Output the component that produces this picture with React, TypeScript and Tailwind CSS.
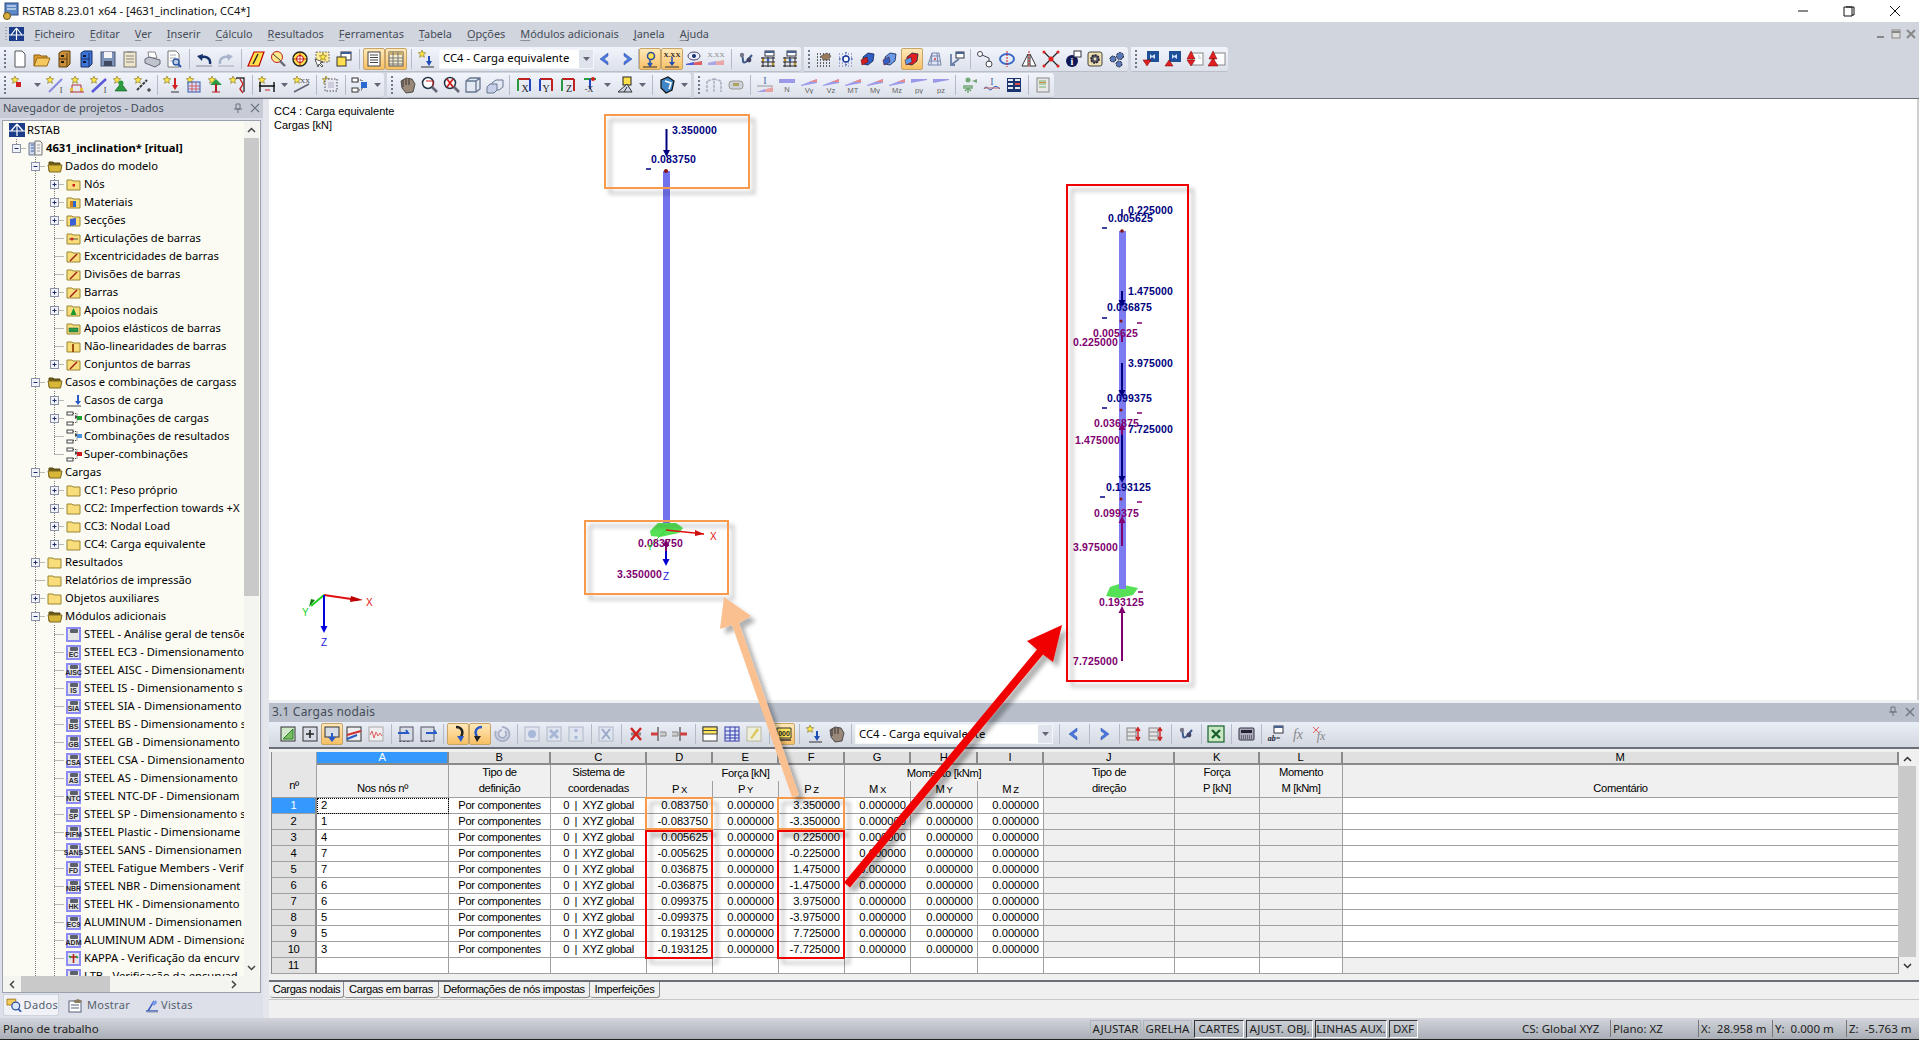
import type { ReactNode } from "react";

const star = (x = 0, y = 0) => (
  <path transform={`translate(${x} ${y})`} d="M4 0l1 2.6 2.7.2-2 1.8.7 2.7L4 5.8 1.600 7.300l.7-2.700-2-1.800 2.700-.2z" fill="#ffe84a" stroke="#7a6a10" strokeWidth=".6" />
);
const dia = (top: string, label: string, flip = false) => (
  <>
    <path d={flip ? "M1 3h16v1L1 7z" : "M1 9L17 3v4L1 10z"} fill="#9a9ae8" />
    <path d={flip ? "" : "M9 6l8-3v3z"} fill={top} />
    <text x="9" y="17" fontSize="7.500" textAnchor="middle" fill="#666" fontFamily="Liberation Sans, sans-serif">{label}</text>
  </>
);
const blueCube = (c = "#2f5fc4", red = "#d02020") => (
  <>
    <path d="M4 7l5-4 6 1-1 7-5 4-5-1z" fill={c} stroke="#14224f" strokeWidth=".8" />
    <path d="M2 10l6-3 1 5-6 3z" fill={red} stroke="#600" strokeWidth=".5" />
  </>
);
const abacus = (
  <>
    <rect x="6" y="1" width="9" height="5" fill="#fff" stroke="#334" />
    <rect x="6" y="1" width="9" height="2" fill="#46628f" />
    <path d="M2 8h14M2 12h14M2 16h14M4 7v10M9 7v10M14 7v10" stroke="#222" />
    <circle cx="4" cy="10" r="1.300" fill="#c09020" /><circle cx="9" cy="10" r="1.300" fill="#3060c0" /><circle cx="14" cy="14" r="1.300" fill="#c09020" />
  </>
);
const dotGrid = (c: string) => (
  <path d="M2 4h14M2 7h14M2 10h14M2 13h14M2 16h14" stroke={c} strokeDasharray="1 2" strokeWidth="1.300" />
);

const icons: Record<string, ReactNode> = {
  new: <path d="M4 1h7l3 3v13H4z" fill="#fff" stroke="#555" />,
  open: <><path d="M1 16V5h6l1 1h6v3" fill="#dd9d2c" stroke="#8b5f12" /><path d="M4 8h13l-3 8H1z" fill="#f6c95e" stroke="#94691a" /></>,
  db1: <><path d="M4 3l3-2h8v13l-3 3H4z" fill="#c98e3a" stroke="#5e3f10" /><path d="M4 9h8M12 3v14" stroke="#5e3f10" /><rect x="6" y="5" width="3" height="2" fill="#231a06" /><rect x="6" y="11" width="3" height="2" fill="#231a06" /></>,
  db2: <><path d="M4 3l3-2h8v13l-3 3H4z" fill="#3c74d8" stroke="#183068" /><path d="M4 9h8M12 3v14" stroke="#183068" /><rect x="6" y="5" width="3" height="2" fill="#0c1838" /><rect x="6" y="11" width="3" height="2" fill="#0c1838" /></>,
  save: <><rect x="2" y="2" width="14" height="14" fill="#7f93b8" stroke="#4a5878" /><rect x="5" y="2" width="8" height="6" fill="#f4f4f4" /><rect x="5" y="11" width="8" height="5" fill="#3f4a60" /></>,
  clip: <><rect x="3" y="2" width="12" height="15" fill="#efe6c8" stroke="#777" /><rect x="6" y="1" width="6" height="2" fill="#999" /><path d="M5 6h8M5 9h8M5 12h8" stroke="#888" /></>,
  print: <><path d="M5 2h7l2 6H6z" fill="#fff" stroke="#888" /><path d="M2 9l4-2 11 3v4l-5 3-10-4z" fill="#bfc4cc" stroke="#667" /></>,
  prev: <><path d="M3 1h8l3 3v13H3z" fill="#fff" stroke="#777" /><path d="M5 5h6M5 8h6M5 11h3" stroke="#aaa" /><circle cx="11" cy="12" r="3" fill="#bcd" stroke="#2a54a8" strokeWidth="1.300" /><path d="M13 14l3 3" stroke="#2a54a8" strokeWidth="2" /></>,
  undo: <><path d="M15 14c1-6-5-9-10-6" fill="none" stroke="#14316e" strokeWidth="2.400" /><path d="M2 6l6-2-1 7z" fill="#14316e" /><path d="M1 16h16" stroke="#889" /></>,
  redo: <><path d="M3 14c-1-6 5-9 10-6" fill="none" stroke="#a9b4ca" strokeWidth="2.400" /><path d="M16 6l-6-2 1 7z" fill="#a9b4ca" /><path d="M1 16h16" stroke="#aab" /></>,
  para: <><path d="M7 2h10l-5 14H1z" fill="#ffe04d" stroke="#c00000" strokeWidth="1.200" /><path d="M6 14L11 4" stroke="#222" strokeWidth="1.400" /></>,
  circ: <><circle cx="8" cy="7" r="5.500" fill="#ffe98a" stroke="#c02020" /><path d="M4 4l8 7" stroke="#333" /><path d="M11 11l5 5" stroke="#667" strokeWidth="2.400" /></>,
  target: <><circle cx="9" cy="9" r="7" fill="#ffe04d" stroke="#222" strokeWidth="1.400" /><circle cx="9" cy="9" r="3.500" fill="#fff" stroke="#c00000" /><path d="M9 3v12M3 9h12" stroke="#c00000" strokeWidth=".8" /></>,
  starwin: <><rect x="3" y="2" width="13" height="10" fill="#ffeb9a" stroke="#777" strokeDasharray="2 1" />{star(6, 3)}<path d="M2 9l3 8 1-3 3 3 1-1-3-3 3-1z" fill="#fff" stroke="#333" strokeWidth=".8" /></>,
  win2: <><rect x="6" y="2" width="10" height="8" fill="#fff" stroke="#333" /><rect x="6" y="2" width="10" height="2" fill="#3a5a9a" /><rect x="2" y="7" width="9" height="9" fill="#ffde4d" stroke="#333" /></>,
  list: <><rect x="3" y="2" width="12" height="14" fill="#fff" stroke="#444" /><path d="M5 5h8M5 7.500h8M5 10h8M5 12.500h8" stroke="#444" /></>,
  table: <><rect x="2" y="2" width="14" height="14" fill="#f6efd0" stroke="#555" /><rect x="2" y="2" width="14" height="3" fill="#c9b070" /><path d="M2 8h14M2 11h14M2 14h14M6 2v14M11 2v14" stroke="#777" /></>,
  load: <>{star(1, 0)}<path d="M12 6v8" stroke="#1f4fb5" strokeWidth="2" /><path d="M9 11h6l-3 5z" fill="#1f4fb5" /><path d="M4 17h13" stroke="#333" /></>,
  al: <path d="M12 3L4 9l8 6v-3L8 9l4-3z" fill="#4a78e0" stroke="#2a4aa0" strokeWidth=".5" />,
  ar: <path d="M6 3l8 6-8 6v-3l4-3-4-3z" fill="#4a78e0" stroke="#2a4aa0" strokeWidth=".5" />,
  actp: <><circle cx="10" cy="6" r="3.500" fill="#ffe04d" stroke="#2a4aa0" strokeWidth="1.500" /><path d="M9 9v5M7 13l2 3 2-3" stroke="#1f4fb5" strokeWidth="1.500" fill="none" /><path d="M2 17h14" stroke="#333" /></>,
  actx: <><text x="9" y="6.500" fontSize="7" fontWeight="700" textAnchor="middle" fontFamily="Liberation Serif, serif" fill="#222">X.XX</text><path d="M9 7v7" stroke="#1f4fb5" strokeWidth="1.500" /><path d="M6 12h6l-3 4z" fill="#1f4fb5" /><path d="M2 17h14" stroke="#333" /></>,
  eye: <><ellipse cx="9" cy="6" rx="6" ry="4" fill="#eef" stroke="#446" /><circle cx="9" cy="6" r="2" fill="#14316e" /><path d="M1 14l16-3v4H1z" fill="#e06060" /><path d="M1 14l8-2v3H1z" fill="#5060d8" /></>,
  xxg: <><text x="9" y="7" fontSize="7" textAnchor="middle" fontFamily="Liberation Serif, serif" fill="#888">X.XX</text><path d="M1 13l16-3v5H1z" fill="#e8a8a8" /><path d="M1 13l8-2v4H1z" fill="#a8a8e8" /></>,
  hand: <><path d="M3 5c3 0 3 4 3 6s2 2 4 0l5-6" fill="none" stroke="#3f5a8a" strokeWidth="2" /><circle cx="5" cy="5" r="2.200" fill="#778" /><circle cx="12" cy="10" r="2.400" fill="#446" /></>,
  gridA: abacus,
  gridB: abacus,
  dots1: <>{dotGrid("#333")}<path d="M6 6l6-3 4 3-3 4-5 0z" fill="#9a7a5a" stroke="#444" strokeWidth=".6" /></>,
  dots2: <><path d="M2 9h14M9 2v14" stroke="#2444b0" strokeDasharray="1.500 1.500" strokeWidth="1.300" />{dotGrid("#8898c8")}<circle cx="9" cy="9" r="3" fill="#fff" stroke="#1a3aa0" strokeWidth="1.400" /></>,
  blue1: blueCube(),
  blue2: blueCube("#6a9ae8", "#3060c8"),
  blue3: blueCube("#e02020", "#5a9ae8"),
  grid3: <><path d="M3 15l4-12h7l2 12z" fill="#dfe6f5" stroke="#7a88b0" /><path d="M4 11h12M6 6h9M7 3l-1 12M12 3l1 12" stroke="#7a88b0" /><circle cx="10" cy="9" r="1" fill="#d03030" /></>,
  frame: <><rect x="9" y="2" width="8" height="6" fill="#fff" stroke="#334" /><rect x="9" y="2" width="8" height="2" fill="#46628f" /><path d="M4 4v11h4M4 15l8-6" fill="none" stroke="#6a80a8" strokeWidth="1.800" /></>,
  chain: <><circle cx="4" cy="4" r="2.500" fill="#fff" stroke="#445" /><circle cx="13" cy="14" r="3" fill="#fff" stroke="#445" /><path d="M6 5l7 3v4" fill="none" stroke="#445" /></>,
  rot: <><ellipse cx="9" cy="9" rx="7" ry="5" fill="none" stroke="#3868c8" strokeWidth="2" /><path d="M9 1v16" stroke="#d02020" strokeDasharray="2 1" /></>,
  mirror: <><path d="M8 4v12H2zM10 4v12h6z" fill="#fff" stroke="#333" /><path d="M9 1v16" stroke="#d02020" strokeDasharray="2 1" /></>,
  xcross: <><path d="M2 2l14 14M16 2L2 16" stroke="#222" strokeWidth="1.200" /><circle cx="9" cy="9" r="2.500" fill="#e02020" /><circle cx="2" cy="2" r="1.500" fill="#e02020" /><circle cx="16" cy="2" r="1.500" fill="#e02020" /><circle cx="2" cy="16" r="1.500" fill="#e02020" /><circle cx="16" cy="16" r="1.500" fill="#e02020" /></>,
  info: <><circle cx="8" cy="11" r="6" fill="#101858" /><text x="8" y="15" fontSize="10" fontWeight="700" textAnchor="middle" fill="#fff" fontFamily="Liberation Serif, serif">i</text><rect x="10" y="1" width="7" height="6" fill="#fff" stroke="#334" /></>,
  gear1: <><rect x="2" y="2" width="14" height="14" rx="2" fill="#efe0b0" stroke="#444" /><circle cx="9" cy="9" r="4" fill="#556" stroke="#223" strokeDasharray="2 1" strokeWidth="1.600" /><circle cx="9" cy="9" r="1.400" fill="#efe0b0" /></>,
  gear2: <><circle cx="12" cy="6" r="3.500" fill="#5878b8" stroke="#223" strokeDasharray="2 1" /><circle cx="5" cy="9" r="3" fill="#5878b8" stroke="#223" strokeDasharray="2 1" /><circle cx="11" cy="14" r="3" fill="#5878b8" stroke="#223" strokeDasharray="2 1" /></>,
  bd1: <><rect x="5" y="1" width="12" height="11" fill="#1f4f96" /><path d="M8 4l2 2 3-2v5l-3-2-2 2z" fill="#cfe0ff" /><path d="M1 10h8l-4 6z" fill="#e02020" stroke="#700" strokeWidth=".5" /></>,
  bd2: <><rect x="5" y="1" width="12" height="11" fill="#1f4f96" /><path d="M8 4l2 2 3-2v5l-3-2-2 2z" fill="#cfe0ff" /><path d="M5 10l4 6H1z" fill="#e02020" stroke="#700" strokeWidth=".5" /></>,
  bd3: <><rect x="6" y="3" width="11" height="12" fill="#fff" stroke="#888" /><path d="M12 3l4 6-4 0z" fill="#ddd" /><path d="M1 10h8l-4 6zM5 1l4 8H1z" fill="#e02020" stroke="#700" strokeWidth=".5" /></>,
  bd4: <><rect x="6" y="3" width="11" height="12" fill="#fff" stroke="#888" /><path d="M5 1l4 8H1zM5 8l5 8H0z" fill="#e02020" stroke="#700" strokeWidth=".5" /></>,
  s1: <>{star(0, 0)}<rect x="5" y="6" width="5" height="5" fill="#d02020" /></>,
  barS: <>{star(0, 0)}<path d="M3 16L16 3" stroke="#8888dd" strokeWidth="2" /><text x="15" y="17" fontSize="8" textAnchor="middle" fill="#444" fontFamily="Liberation Serif, serif">I</text></>,
  nodeS: <>{star(3, 0)}<path d="M2 16h14M4 9v7M13 9v7M4 9h9" stroke="#b03030" /><rect x="2" y="12" width="3" height="3" fill="#e8c040" /><rect x="12" y="12" width="3" height="3" fill="#e8c040" /></>,
  barS2: <>{star(0, 0)}<path d="M2 16L16 3" stroke="#5858d8" strokeWidth="2.500" /><text x="15" y="17" fontSize="8" textAnchor="middle" fill="#444" fontFamily="Liberation Serif, serif">I</text></>,
  supS: <>{star(1, 0)}<path d="M9 7l6 8H3z" fill="#2c9a40" stroke="#14501f" strokeWidth=".6" /><circle cx="9" cy="7" r="2.500" fill="#2c9a40" /></>,
  wandS: <>{star(0, 0)}<path d="M3 14L13 4" stroke="#3a3a3a" strokeWidth="2" strokeDasharray="3 1" /><path d="M13 14h4M15 12v4" stroke="#222" /></>,
  loadN: <>{star(0, 0)}<path d="M12 2v9" stroke="#d02020" strokeWidth="2" /><path d="M9 9h6l-3 5z" fill="#d02020" /><path d="M8 16h8" stroke="#333" /></>,
  matS: <>{star(1, 0)}<rect x="3" y="6" width="12" height="10" fill="#cfe0ff" stroke="#3058b0" /><path d="M3 10h12M3 13h12M7 6v10M11 6v10" stroke="#d03030" strokeWidth=".7" /></>,
  treeS: <>{star(1, 0)}<path d="M9 3l6 6H3z" fill="#2c9a40" /><path d="M9 8v8" stroke="#b02020" strokeWidth="2" /><path d="M5 16h8" stroke="#b02020" /></>,
  twistS: <>{star(0, 0)}<path d="M7 2h8v14" fill="none" stroke="#333" strokeWidth="1.400" /><path d="M11 3l3 5-3 5 3 4" fill="none" stroke="#c02020" strokeWidth="1.400" /></>,
  beamS: <>{star(0, 0)}<path d="M1 10h16M2 6v10M16 6v10" stroke="#111" strokeWidth="1.400" /><path d="M7 14h5" stroke="#d02020" /></>,
  xxS: <>{star(0, 0)}<text x="12" y="7" fontSize="7" textAnchor="middle" fontFamily="Liberation Serif, serif" fill="#444">XX</text><path d="M1 16L16 8" stroke="#667" strokeWidth="1.600" /></>,
  selS: <>{star(0, 0)}<rect x="3" y="3" width="12" height="12" fill="#e8e8f0" stroke="#444" strokeDasharray="1.500 1.500" /><rect x="6" y="6" width="6" height="6" fill="#ccd" /></>,
  combo: <><rect x="1" y="2" width="6" height="4" fill="#fff" stroke="#333" /><rect x="1" y="12" width="6" height="4" fill="#fff" stroke="#333" /><path d="M7 4h4v10H7" fill="none" stroke="#333" strokeDasharray="1 1" /><rect x="10" y="6" width="6" height="6" fill="#2a6ad0" /></>,
  hand2: <><path d="M3 5l5-3 6 1 3 5-2 8-7 1-4-5z" fill="#9a8878" stroke="#333" strokeWidth=".8" /><path d="M5 4v7M8 3v6M11 3v6" stroke="#333" /></>,
  zoomW: <><circle cx="8" cy="7" r="5.500" fill="#fff" stroke="#234" strokeWidth="1.500" /><path d="M6 5h7v5" fill="none" stroke="#d02020" /><path d="M12 11l5 5" stroke="#667" strokeWidth="2.600" /></>,
  zoomX: <><circle cx="8" cy="7" r="5.500" fill="#fff" stroke="#234" strokeWidth="1.500" /><path d="M5 3l6 8M11 3l-6 8" stroke="#d02020" strokeWidth="1.800" /><path d="M12 11l5 5" stroke="#667" strokeWidth="2.600" /></>,
  box: <path d="M2 5l4-3h10v11l-4 3H2zM2 5h10v11M12 5l4-3" fill="#e4e8f2" stroke="#667790" strokeWidth="1.300" />,
  box2: <><path d="M6 7l4-3h7v7l-4 3H6z" fill="#e4e8f2" stroke="#667790" /><path d="M1 11l3-3h7v6l-3 3H1z" fill="#c5d0e8" stroke="#667790" /></>,
  vx: <><path d="M3 3h12" stroke="#c02020" strokeWidth="2" /><path d="M3 3v12" stroke="#2c9a40" strokeWidth="2" /><path d="M15 3v12" stroke="#2444c0" strokeWidth="2" /><text x="10" y="16" fontSize="10" textAnchor="middle" fontFamily="Liberation Serif, serif" fill="#222">X</text></>,
  vy: <><path d="M3 3h12" stroke="#c02020" strokeWidth="2" /><path d="M3 3v12" stroke="#2444c0" strokeWidth="2" /><path d="M15 3v12" stroke="#c02020" strokeWidth="2" /><text x="9" y="16" fontSize="10" textAnchor="middle" fontFamily="Liberation Serif, serif" fill="#222">Y</text></>,
  vz: <><path d="M3 3h12" stroke="#c02020" strokeWidth="2" /><path d="M3 3v12" stroke="#2c9a40" strokeWidth="2" /><path d="M15 3v12" stroke="#c02020" strokeWidth="2" /><text x="10" y="16" fontSize="10" textAnchor="middle" fontFamily="Liberation Serif, serif" fill="#222">Z</text></>,
  vmx: <><path d="M3 3h12" stroke="#2c9a40" strokeWidth="2" /><circle cx="12" cy="3" r="2" fill="#d02020" /><path d="M9 3v10" stroke="#2444c0" strokeWidth="2" /><text x="8" y="16" fontSize="8" textAnchor="middle" fontFamily="Liberation Serif, serif" fill="#222">-X</text></>,
  lamp: <><rect x="7" y="1" width="8" height="8" fill="#ffe04d" stroke="#222" /><path d="M2 16l9-8 5 8zM8 16l3-5" fill="#cdd5e6" stroke="#333" /></>,
  shield: <><path d="M3 4l7-3 6 4-2 9-6 3-5-5z" fill="#3f86c8" stroke="#111" strokeWidth="1.200" /><path d="M7 5l6 2-2 6" fill="none" stroke="#fff" strokeWidth="1.600" /></>,
  frameG: <path d="M2 16V5l7-2v13M9 3l7 2v11" fill="none" stroke="#a8b0c0" strokeWidth="1.600" strokeDasharray="3 1" />,
  tag: <><rect x="2" y="5" width="14" height="8" rx="3" fill="#cfd2d8" stroke="#999" /><rect x="6" y="7" width="6" height="3" fill="#b0a060" /></>,
  nI: <><text x="9" y="8" fontSize="10" textAnchor="middle" fontFamily="Liberation Serif, serif" fill="#5070a8">I</text><path d="M1 16l16-5v5z" fill="#e8a0a0" /><path d="M1 16l8-3v3z" fill="#a0a0e8" /><path d="M1 10h16" stroke="#999" /></>,
  nN: <><path d="M1 3h16v4H1z" fill="#9a9ae8" /><text x="9" y="16" fontSize="7.500" textAnchor="middle" fill="#666" fontFamily="Liberation Sans, sans-serif">N</text></>,
  vyD: dia("#e88a8a", "Vy"),
  vzD: dia("#e88a8a", "Vz"),
  mtD: dia("#e88a8a", "MT"),
  myD: dia("#e88a8a", "My"),
  mzD: dia("#e88a8a", "Mz"),
  pyD: dia("#e88a8a", "py", true),
  pzD: dia("#e88a8a", "pz", true),
  greenUp: <><circle cx="7" cy="4" r="2.500" fill="#74a878" /><path d="M3 10h8v2H3zM7 12v5M4 15l3-3 3 3" stroke="#74a878" strokeWidth="1.500" fill="none" /><path d="M16 3l-5 2 5 2z" fill="#74a878" /></>,
  beamSine: <><text x="9" y="9" fontSize="10" textAnchor="middle" fontFamily="Liberation Serif, serif" fill="#5070a8">I</text><path d="M1 13c3-6 5 4 8 0s5-3 8 0" fill="none" stroke="#3060c0" /><path d="M1 12h16" stroke="#c06060" /></>,
  multi: <><rect x="2" y="2" width="14" height="14" fill="#1a3470" /><path d="M3 4h5M10 4h5M3 8h5M10 8h5M3 12h5M10 12h5" stroke="#e8e8f0" strokeWidth="2" /><path d="M10 8h5" stroke="#e05050" strokeWidth="2" /></>,
  report: <><rect x="3" y="2" width="12" height="14" fill="#e8e8e8" stroke="#888" /><path d="M5 5h7M5 8h7M5 11h7" stroke="#70b070" /><path d="M5 6.500h7" stroke="#d09040" /></>,
  t1: <><rect x="2" y="2" width="14" height="14" fill="#cfe8c8" stroke="#333" /><path d="M4 14L14 4v10z" fill="#78c060" stroke="#2a7a30" /></>,
  t2: <><rect x="2" y="2" width="14" height="14" fill="#d8dce4" stroke="#333" /><path d="M5 9h8M9 5v8" stroke="#222" strokeWidth="1.600" /></>,
  t3: <><rect x="2" y="2" width="14" height="10" fill="#d8dce4" stroke="#333" /><path d="M9 8v8" stroke="#2a5ac8" strokeWidth="2" /><path d="M5 12h8l-4 5z" fill="#2a5ac8" /></>,
  t4: <><rect x="2" y="2" width="14" height="14" fill="#eee" stroke="#333" /><path d="M2 10L16 6" stroke="#d03030" strokeWidth="2" /><path d="M2 14L12 10" stroke="#2a5ac8" strokeWidth="2" /></>,
  t5: <><rect x="2" y="2" width="14" height="14" fill="#eee" stroke="#aaa" /><path d="M3 10l2-4 2 7 2-6 2 4 2-3 2 3" fill="none" stroke="#e06060" /></>,
  tin: <><rect x="3" y="2" width="13" height="14" fill="#d8dce4" stroke="#556" /><path d="M1 8h10l-2-3M1 8l2 0" fill="none" stroke="#2a5ac8" strokeWidth="2" /><path d="M3 16v1M7 16v1M11 16v1" stroke="#222" /></>,
  tout: <><rect x="2" y="2" width="13" height="14" fill="#d8dce4" stroke="#556" /><path d="M7 8h10l-2-3" fill="none" stroke="#2a5ac8" strokeWidth="2" /><path d="M3 16v1M7 16v1M11 16v1" stroke="#222" /></>,
  rotL: <><path d="M7 2c6 0 8 5 5 10" fill="none" stroke="#222" strokeWidth="2.400" /><path d="M8 11l7 0-3 6z" fill="#2a5ac8" /></>,
  rotR: <><path d="M11 2C5 2 3 7 6 12" fill="none" stroke="#2a5ac8" strokeWidth="2.400" /><path d="M10 11H3l3 6z" fill="#222" /></>,
  rotG: <path d="M9 2a7 7 0 1 1-6 4M9 5a4 4 0 1 0 3 1" fill="none" stroke="#a8b0c8" strokeWidth="2" />,
  gPlus: <><rect x="2" y="2" width="14" height="14" fill="#dfe4ef" stroke="#b0b8c8" /><circle cx="9" cy="9" r="4" fill="#a8b8d8" /></>,
  gMul: <><rect x="2" y="2" width="14" height="14" fill="#dfe4ef" stroke="#b0b8c8" /><path d="M5 5l8 8M13 5l-8 8" stroke="#a8b8d8" strokeWidth="3" /></>,
  gDiv: <><rect x="2" y="2" width="14" height="14" fill="#dfe4ef" stroke="#b0b8c8" /><path d="M9 4v3M9 11v3" stroke="#a8b8d8" strokeWidth="3" /></>,
  gX: <><rect x="2" y="2" width="14" height="14" fill="#dfe4ef" stroke="#b0b8c8" /><path d="M5 4l8 10M13 4L5 14" stroke="#98a8c8" strokeWidth="2" /></>,
  delR: <><path d="M4 9h10" stroke="#888" strokeWidth="3" /><path d="M4 3l10 12M14 3L4 15" stroke="#d02020" strokeWidth="2.400" /></>,
  insL: <><path d="M9 2v14" stroke="#888" strokeWidth="2" /><path d="M2 9h7" stroke="#d04040" strokeWidth="3" /><path d="M11 7h6v4h-6" fill="#ccc" stroke="#888" /></>,
  insR: <><path d="M9 2v14" stroke="#888" strokeWidth="2" /><path d="M9 9h7" stroke="#d04040" strokeWidth="3" /><path d="M1 7h6v4H1" fill="#ccc" stroke="#888" /></>,
  ctY: <><rect x="2" y="2" width="14" height="14" fill="#fff" stroke="#444" /><rect x="2" y="2" width="14" height="7" fill="#ffe55c" stroke="#444" /><path d="M2 5.500h14" stroke="#444" /></>,
  ctB: <><rect x="2" y="2" width="14" height="14" fill="#dfe6fa" stroke="#3038a8" /><path d="M2 6h14M2 10h14M2 13h14M7 2v14M12 2v14" stroke="#3038a8" /></>,
  ctP: <><rect x="2" y="2" width="14" height="14" fill="#eeeedd" stroke="#b8b8a0" /><path d="M5 13l7-10 2 2-7 9z" fill="#ddc860" /></>,
  act: <><path d="M2 3h14v10H2z" fill="#ffe55c" stroke="#333" /><text x="9" y="11" fontSize="7" fontWeight="700" textAnchor="middle" fontFamily="Liberation Sans, sans-serif" fill="#222">000</text><path d="M2 15h14" stroke="#333" strokeWidth="1.500" /></>,
  sortU: <><rect x="2" y="3" width="9" height="12" fill="#e4e4e4" stroke="#888" /><path d="M2 7h9M2 11h9" stroke="#888" /><path d="M13 2v14M11 6l2-3 2 3M11 12l2 3 2-3" fill="none" stroke="#d02020" strokeWidth="1.400" /></>,
  xls: <><rect x="1" y="1" width="16" height="16" fill="#c8e8c0" stroke="#186030" strokeWidth="1.200" /><path d="M5 5l8 8M13 5l-8 8" stroke="#186030" strokeWidth="2.400" /></>,
  keyp: <><rect x="2" y="3" width="15" height="12" rx="1" fill="#aab" stroke="#334" /><rect x="4" y="5" width="11" height="3" fill="#223" /><path d="M4 11h11M4 13h11" stroke="#223" strokeDasharray="1 1" /></>,
  abEq: <><rect x="7" y="1" width="9" height="7" fill="#fff" stroke="#334" /><rect x="7" y="1" width="9" height="2" fill="#46628f" /><text x="7" y="16" fontSize="8" fontWeight="700" fontStyle="italic" textAnchor="middle" fontFamily="Liberation Serif, serif" fill="#223">ab=</text></>,
  fx: <text x="9" y="14" fontSize="14" fontStyle="italic" textAnchor="middle" fontFamily="Liberation Serif, serif" fill="#888">fx</text>,
  fxr: <><text x="10" y="15" fontSize="12" fontStyle="italic" textAnchor="middle" fontFamily="Liberation Serif, serif" fill="#888">fx</text><path d="M2 2l6 6M8 2L2 8" stroke="#e06060" /></>,
};

function Icon({ n, active }: { n: string; active?: boolean }) {
  return (
    <span className={`flex h-[22px] w-[22px] shrink-0 items-center justify-center ${active ? "rounded-[2px] border border-[#c8a468] bg-gradient-to-b from-[#ffe9b8] to-[#f8bf62]" : ""}`}>
      <svg width="18" height="18" viewBox="0 0 18 18">{icons[n]}</svg>
    </span>
  );
}

const Sep = ({ wide }: { wide?: boolean }) => (
  <span className={`flex h-[20px] shrink-0 justify-center ${wide ? "w-[8px]" : "w-[7px]"}`}>
    <span className="h-full w-px bg-[#b4bac6]" />
  </span>
);

const Grip = () => (
  <span className="flex h-[20px] w-[9px] shrink-0 flex-col items-center justify-center gap-[2px]">
    {[0, 1, 2, 3, 4].map((i) => (
      <span key={i} className="h-[2px] w-[2px] bg-[#6f7888]" />
    ))}
  </span>
);

const Drop = () => (
  <span className="flex w-[13px] shrink-0 justify-center">
    <svg width="7" height="4" viewBox="0 0 7 4"><path d="M0 0h7L3.500 4z" fill="#667" /></svg>
  </span>
);

function Combo({ w }: { w: string }) {
  return (
    <div className={`flex h-[20px] shrink-0 items-center justify-between border border-[#f4f6fa] bg-white ${w}`}>
      <span className="whitespace-nowrap pl-[3px] text-[11.300px] text-black">CC4 - Carga equivalente</span>
      <span className="flex h-full w-[14px] items-center justify-center bg-[#dfe3ec]">
        <svg width="7" height="4" viewBox="0 0 7 4"><path d="M0 0h7L3.500 4z" fill="#667" /></svg>
      </span>
    </div>
  );
}

// "|" separator, "g" grip, "v" dropdown, "_" small gap, "*" suffix pressed
function Bar({ items, wideSep, combo }: { items: string; wideSep?: boolean; combo?: string }) {
  return (
    <>
      {items.split(" ").map((t, i) => {
        if (t === "|") return <Sep key={i} wide={wideSep} />;
        if (t === "g") return <Grip key={i} />;
        if (t === "v") return <Drop key={i} />;
        if (t === "_") return <span key={i} className="w-[2px] shrink-0" />;
        if (t === "C") return <Combo key={i} w={combo ?? "w-[155px]"} />;
        if (t === "!") return <span key={i} className="h-[20px] w-px shrink-0 bg-[#b4bac6]" />;
        return <Icon key={i} n={t.replace("*", "")} active={t.endsWith("*")} />;
      })}
    </>
  );
}

const Seg = ({ children, last }: { children: ReactNode; last?: boolean }) => (
  <div className={`flex h-[25px] items-center rounded-r-[3px] border-b border-[#b9bec9] bg-gradient-to-b from-[#f1f4fb] to-[#dde1ea] ${last ? "" : "mr-[3px]"}`}>
    {children}
  </div>
);

const menus = ["Ficheiro", "Editar", "Ver", "Inserir", "Cálculo", "Resultados", "Ferramentas", "Tabela", "Opções", "Módulos adicionais", "Janela", "Ajuda"];

type Node = { l: number; t: string; i: string; x?: "+" | "-"; b?: boolean };

const steel = (t: string, i: string): Node => ({ l: 3, t, i: "m:" + i });

const tree: Node[] = [
  { l: 0, t: "RSTAB", i: "rstab" },
  { l: 1, t: "4631_inclination* [ritual]", i: "doc", x: "-", b: true },
  { l: 2, t: "Dados do modelo", i: "open", x: "-" },
  { l: 3, t: "Nós", i: "f:node", x: "+" },
  { l: 3, t: "Materiais", i: "f:mat", x: "+" },
  { l: 3, t: "Secções", i: "f:sec", x: "+" },
  { l: 3, t: "Articulações de barras", i: "f:art" },
  { l: 3, t: "Excentricidades de barras", i: "f:exc" },
  { l: 3, t: "Divisões de barras", i: "f:exc" },
  { l: 3, t: "Barras", i: "f:exc", x: "+" },
  { l: 3, t: "Apoios nodais", i: "f:sup", x: "+" },
  { l: 3, t: "Apoios elásticos de barras", i: "f:ela" },
  { l: 3, t: "Não-linearidades de barras", i: "f:non" },
  { l: 3, t: "Conjuntos de barras", i: "f:exc", x: "+" },
  { l: 2, t: "Casos e combinações de cargass", i: "open", x: "-" },
  { l: 3, t: "Casos de carga", i: "cases", x: "+" },
  { l: 3, t: "Combinações de cargas", i: "c:#1aa030", x: "+" },
  { l: 3, t: "Combinações de resultados", i: "c:#4a90e0" },
  { l: 3, t: "Super-combinações", i: "c:#d01818" },
  { l: 2, t: "Cargas", i: "open", x: "-" },
  { l: 3, t: "CC1: Peso próprio", i: "f", x: "+" },
  { l: 3, t: "CC2: Imperfection towards +X", i: "f", x: "+" },
  { l: 3, t: "CC3: Nodal Load", i: "f", x: "+" },
  { l: 3, t: "CC4: Carga equivalente", i: "f", x: "+" },
  { l: 2, t: "Resultados", i: "f", x: "+" },
  { l: 2, t: "Relatórios de impressão", i: "f" },
  { l: 2, t: "Objetos auxiliares", i: "f", x: "+" },
  { l: 2, t: "Módulos adicionais", i: "open", x: "-" },
  steel("STEEL - Análise geral de tensões", ""),
  steel("STEEL EC3 - Dimensionamento", "EC"),
  steel("STEEL AISC - Dimensionamento", "AISC"),
  steel("STEEL IS - Dimensionamento s", "IS"),
  steel("STEEL SIA - Dimensionamento", "SIA"),
  steel("STEEL BS - Dimensionamento s", "BS"),
  steel("STEEL GB - Dimensionamento", "GB"),
  steel("STEEL CSA - Dimensionamento", "CSA"),
  steel("STEEL AS - Dimensionamento", "AS"),
  steel("STEEL NTC-DF - Dimensionam", "NTC"),
  steel("STEEL SP - Dimensionamento s", "SP"),
  steel("STEEL Plastic - Dimensioname", "PIFM"),
  steel("STEEL SANS - Dimensionamen", "SANS"),
  steel("STEEL Fatigue Members - Verif", "FD"),
  steel("STEEL NBR - Dimensionament", "NBR"),
  steel("STEEL HK - Dimensionamento", "HK"),
  steel("ALUMINUM - Dimensionamen", "EC9"),
  steel("ALUMINUM ADM - Dimensionam", "ADM"),
  steel("KAPPA - Verificação da encurv", "*"),
  steel("LTB - Verificação da encurvad", "LTB"),
  { l: 2, t: "", i: "" },
];

const folderOverlay: Record<string, ReactNode> = {
  node: <rect x="6.500" y="6" width="2.500" height="2.500" fill="#d01818" />,
  mat: <><rect x="4" y="5" width="3" height="6" fill="#d08020" /><rect x="7" y="5" width="3" height="6" fill="#2a6ad0" /></>,
  sec: <path d="M4 5l6-1v7l-6 1z" fill="#3a60d8" />,
  art: <><path d="M3 7h9" stroke="#555" /><circle cx="6" cy="7" r="1.500" fill="#d02020" /></>,
  exc: <path d="M4 11l7-7" stroke="#a02020" strokeWidth="1.400" />,
  sup: <path d="M7.500 4l3 7h-6z" fill="#1a9a30" />,
  ela: <path d="M3 6h9v4H3z" fill="#2a9a40" stroke="#155" strokeWidth=".5" />,
  non: <rect x="6" y="4" width="2" height="8" fill="#a05010" />,
};

function TreeIcon({ i }: { i: string }) {
  if (i === "") return null;
  if (i === "rstab")
    return (
      <svg width="16" height="14" viewBox="0 0 16 14">
        <rect width="16" height="14" fill="#1c3d8a" />
        <path d="M0 8h16M8 1v12M8 1L2 8M8 1l6 7" stroke="#fff" strokeWidth="1.200" />
      </svg>
    );
  if (i === "doc")
    return (
      <svg width="15" height="16" viewBox="0 0 15 16">
        <path d="M1 3h6v12H1z" fill="#cfd8ea" stroke="#6b7a98" />
        <path d="M7 1h5l2 2v12H7z" fill="#f3f3f3" stroke="#777" />
        <path d="M3 5h3M3 8h3M3 11h3" stroke="#3a60a8" />
        <path d="M9 5h3M9 8h3M9 11h3" stroke="#999" />
      </svg>
    );
  if (i === "open")
    return (
      <svg width="16" height="13" viewBox="0 0 16 13">
        <path d="M2 11V2h4l1 1h6v3" fill="#6b5a1a" stroke="#5a4a10" />
        <path d="M1 5h14l-1.500 7H2.500z" fill="#d8b63a" stroke="#7d691e" />
      </svg>
    );
  if (i === "cases")
    return (
      <svg width="16" height="14" viewBox="0 0 16 14">
        <path d="M1 13h14" stroke="#444" />
        <path d="M12 2v7" stroke="#2a5ac8" strokeWidth="2" />
        <path d="M9 8h6l-3 4z" fill="#2a5ac8" />
      </svg>
    );
  if (i.startsWith("c:"))
    return (
      <svg width="16" height="15" viewBox="0 0 16 15">
        <rect x="1" y="1" width="6" height="3" fill="#fff" stroke="#444" />
        <rect x="1" y="11" width="6" height="3" fill="#fff" stroke="#444" />
        <path d="M7 2.500h4v9H7" fill="none" stroke="#444" strokeDasharray="1 1" />
        <path d="M9 4l3 2-3 2z" fill="#444" />
        <rect x="11" y="5" width="5" height="4" fill={i.slice(2)} />
      </svg>
    );
  if (i.startsWith("m:")) {
    const a = i.slice(2);
    return (
      <span className="relative flex h-[15px] w-[15px] items-end justify-center overflow-visible border-2 border-[#8c8cf4] bg-[#e6e6e6]">
        {a === "*" ? (
          <svg width="11" height="11" viewBox="0 0 11 11"><path d="M5.500 1v9M2 4h7" stroke="#b02020" strokeWidth="1.600" /><path d="M1 3l2 2M8 3l2 2" stroke="#1a9a30" strokeWidth="1.600" /></svg>
        ) : (
          <>
            <span className="absolute left-[2px] top-0 h-[4px] w-[8px] rounded-[1px] bg-[#5c6068]" />
            <span className="whitespace-nowrap text-[7px] font-bold leading-[7px] text-[#26262c] [font-family:'Liberation_Sans',sans-serif]">{a}</span>
          </>
        )}
      </span>
    );
  }
  return (
    <svg width="15" height="13" viewBox="0 0 15 13">
      <path d="M1 2h5l1 1h7v9H1z" fill="#f8dd7a" stroke="#9a8530" />
      {i.startsWith("f:") ? folderOverlay[i.slice(2)] : null}
    </svg>
  );
}

function TreeCell({ kind, x }: { kind: "pipe" | "tee" | "end" | "none"; x?: "+" | "-" }) {
  return (
    <svg width="19" height="18" viewBox="0 0 19 18" className="shrink-0">
      {kind === "pipe" && <path d="M9.500 0v18" stroke="#777" strokeDasharray="1 1" />}
      {(kind === "tee" || kind === "end") && (
        <path d={kind === "tee" ? "M9.500 0v18M9.500 9.500H19" : "M9.500 0v9.500M9.500 9.500H19"} stroke="#777" strokeDasharray="1 1" fill="none" />
      )}
      {x && (
        <>
          <rect x="5.500" y="5.500" width="8" height="8" fill="#f1f3f9" stroke="#8a93a8" />
          <path d={x === "+" ? "M7.500 9.500h4M9.500 7.500v4" : "M7.500 9.500h4"} stroke="#1c2c6c" />
        </>
      )}
    </svg>
  );
}

function TreeRow({ idx }: { idx: number }) {
  const n = tree[idx];
  const siblingAfter = (lvl: number) => {
    for (let j = idx + 1; j < tree.length; j++) {
      if (tree[j].l < lvl) return false;
      if (tree[j].l === lvl) return true;
    }
    return false;
  };
  return (
    <div className="flex h-[18px] shrink-0 items-center whitespace-nowrap">
      {Array.from({ length: n.l }, (_, k) => {
        const lvl = k + 1;
        if (lvl === n.l) return <TreeCell key={k} kind={siblingAfter(lvl) ? "tee" : "end"} x={n.x} />;
        return <TreeCell key={k} kind={lvl >= 2 && siblingAfter(lvl) ? "pipe" : "none"} />;
      })}
      <span className="flex w-[19px] shrink-0 justify-center"><TreeIcon i={n.i} /></span>
      <span className={`pl-[1px] text-black ${n.b ? "font-bold" : ""}`}>{n.t}</span>
    </div>
  );
}

function Navigator() {
  return (
    <aside className="flex w-[263px] shrink-0 flex-col bg-[#dde0e8]">
      <div className="flex h-[19px] items-center justify-between bg-[#c6cbd5] pb-[1px] pl-[3px] pr-[3px] text-[#444c58]">
        <span className="text-[11px]">Navegador de projetos - Dados</span>
        <span className="flex items-center gap-[7px]">
          <svg width="10" height="11" viewBox="0 0 10 11"><path d="M3 1h4v5H3zM1 6h8M5 6v4" fill="none" stroke="#6a7280" /></svg>
          <svg width="10" height="10" viewBox="0 0 10 10"><path d="M1 1l8 8M9 1L1 9" stroke="#6a7280" strokeWidth="1.200" /></svg>
        </span>
      </div>
      <div className="mx-[2px] mt-[2px] flex min-h-0 flex-1 flex-col border border-[#9ca2ad] bg-[#fbfbf3]">
        <div className="flex min-h-0 flex-1">
          <div className="flex w-[241px] shrink-0 flex-col overflow-hidden pl-[4px] text-[11.200px] [font-family:'Noto_Sans',sans-serif]">
            {tree.map((_, i) => <TreeRow key={i} idx={i} />)}
          </div>
          <div className="flex w-[15px] shrink-0 flex-col bg-[#f4f4f0]">
            <span className="flex h-[17px] items-center justify-center">
              <svg width="9" height="6" viewBox="0 0 9 6"><path d="M1 5l3.500-3.500L8 5" fill="none" stroke="#444" strokeWidth="1.500" /></svg>
            </span>
            <span className="h-[458px] bg-[#c9c9c9]" />
            <span className="flex-1" />
            <span className="flex h-[17px] items-center justify-center">
              <svg width="9" height="6" viewBox="0 0 9 6"><path d="M1 1l3.500 3.500L8 1" fill="none" stroke="#444" strokeWidth="1.500" /></svg>
            </span>
          </div>
        </div>
        <div className="flex h-[16px] shrink-0 items-center bg-[#f4f4f0]">
          <span className="flex w-[18px] justify-center">
            <svg width="6" height="9" viewBox="0 0 6 9"><path d="M5 1L1.500 4.500 5 8" fill="none" stroke="#444" strokeWidth="1.500" /></svg>
          </span>
          <span className="h-full w-[89px] bg-[#c9c9c9]" />
          <span className="flex-1" />
          <span className="flex w-[52px] justify-center">
            <svg width="6" height="9" viewBox="0 0 6 9"><path d="M1 1l3.500 3.500L1 8" fill="none" stroke="#444" strokeWidth="1.500" /></svg>
          </span>
        </div>
      </div>
      <div className="flex h-[25px] shrink-0 items-start pl-[4px] pt-[2px] text-[11px] tracking-[0.3px] text-[#555f70]">
        <div className="flex h-[20px] w-[54px] items-center gap-[2px] rounded-b-[2px] bg-[#f0f2f7] pl-[2px] shadow-[0_0_0_1px_#cfd3dc]">
          <svg width="16" height="14" viewBox="0 0 16 14"><path d="M1 1h9v6H1z" fill="#f5cc5c" stroke="#a88020" /><circle cx="10" cy="8" r="4" fill="#dce8fa" stroke="#2a54a8" strokeWidth="1.300" /><path d="M12.500 11l3 3" stroke="#2a54a8" strokeWidth="1.800" /></svg>
          Dados
        </div>
        <div className="ml-[10px] flex h-[20px] items-center gap-[3px]">
          <svg width="16" height="15" viewBox="0 0 16 15"><rect x="1" y="3" width="12" height="11" fill="#fff" stroke="#55627a" /><path d="M3 7h8M3 10h8" stroke="#55627a" /><path d="M5 3l5-2 4 2-2 2H7z" fill="#8a7a60" /></svg>
          Mostrar
        </div>
        <div className="ml-[15px] flex h-[20px] items-center gap-[2px]">
          <svg width="14" height="15" viewBox="0 0 14 15"><path d="M1 13h12M3 13l6-10" stroke="#3e62c0" strokeWidth="1.500" /><path d="M7 5l4-3 1 3-3 3z" fill="#7a9ae8" /><path d="M2 14h11" stroke="#99a" /></svg>
          Vistas
        </div>
      </div>
    </aside>
  );
}

const rows: [number, string, string][] = [
  [2, "0.083750", "3.350000"],
  [1, "-0.083750", "-3.350000"],
  [4, "0.005625", "0.225000"],
  [7, "-0.005625", "-0.225000"],
  [7, "0.036875", "1.475000"],
  [6, "-0.036875", "-1.475000"],
  [6, "0.099375", "3.975000"],
  [5, "-0.099375", "-3.975000"],
  [5, "0.193125", "7.725000"],
  [3, "-0.193125", "-7.725000"],
];

const colLetters = ["A", "B", "C", "D", "E", "F", "G", "H", "I", "J", "K", "L", "M"];

const Sub = ({ a, b }: { a: string; b: string }) => (
  <span>{a}<span className="ml-[2px] text-[9.500px]">{b}</span></span>
);

const hTwo = "row-span-2 flex flex-col items-center justify-end border-b border-r border-[#a0a0a0] bg-[#f0f0f0] pb-[1px] leading-[16px]";
const hGroup = "flex items-center justify-center bg-[#f0f0f0] leading-[16px]";
const hSub = "flex items-center justify-center border-b border-[#a0a0a0] bg-[#f0f0f0] leading-[16px]";
const cell = "flex h-[16px] items-center border-b border-r border-[#a0a0a0]";
const num = `${cell} justify-end bg-white pr-[4px] tracking-normal`;

function LoadsTable() {
  return (
    <div className="flex h-[235px] shrink-0 border-b-2 border-t-2 border-[#6a6e76] bg-[#f0f0f0] pl-[2px] pr-[2px] pt-[3px]">
      <div className="grid h-[222px] w-[1627px] shrink-0 grid-cols-[45px_132px_102px_96px_66px_66px_66px_66px_67px_66px_131px_85px_83px_556px] grid-rows-[13px_16px_17px_repeat(11,16px)] border-l border-[#8a8a8a] text-[11.200px] tracking-[-0.35px] text-black [font-family:'Liberation_Sans',sans-serif]">
        <div className="row-span-3 flex items-end justify-center border-b border-r border-[#a0a0a0] bg-[#e6e6e6] pb-[3px]">nº</div>
        {colLetters.map((c, i) => (
          <div key={c} className={`flex items-center justify-center border-b-2 border-r-2 border-[#8a8a8a] leading-none ${i === 0 ? "bg-[#3399ff] text-white" : "bg-[#e0e0e0]"}`}>{c}</div>
        ))}
        <div className={hTwo}>Nos nós nº</div>
        <div className={hTwo}><span>Tipo de</span><span>definição</span></div>
        <div className={hTwo}><span>Sistema de</span><span>coordenadas</span></div>
        <div className={`${hGroup} col-span-3 border-r border-[#a0a0a0]`}>Força [kN]</div>
        <div className={`${hGroup} col-span-3 border-r border-[#a0a0a0]`}>Momento [kNm]</div>
        <div className={hTwo}><span>Tipo de</span><span>direção</span></div>
        <div className={hTwo}><span>Força</span><span>P [kN]</span></div>
        <div className={hTwo}><span>Momento</span><span>M [kNm]</span></div>
        <div className={hTwo}>Comentário</div>
        <div className={`${hSub} border-r`}><Sub a="P" b="X" /></div>
        <div className={`${hSub} border-r`}><Sub a="P" b="Y" /></div>
        <div className={`${hSub} border-r`}><Sub a="P" b="Z" /></div>
        <div className={`${hSub} border-r`}><Sub a="M" b="X" /></div>
        <div className={`${hSub} border-r`}><Sub a="M" b="Y" /></div>
        <div className={`${hSub} border-r`}><Sub a="M" b="Z" /></div>
        {rows.map(([node, px, pz], i) => (
          <div key={i} className="contents">
            <div className={`${cell} justify-center border-r-2 border-r-[#8a8a8a] ${i === 0 ? "bg-[#3399ff] text-white" : "bg-[#e0e0e0]"}`}>{i + 1}</div>
            <div className={`${cell} bg-white pl-[4px] ${i === 0 ? "outline-1 -outline-offset-1 outline-dotted outline-black" : ""}`}>{node}</div>
            <div className={`${cell} justify-center bg-white`}>Por componentes</div>
            <div className={`${cell} justify-center bg-white`}>0&nbsp;&nbsp;|&nbsp;&nbsp;XYZ global</div>
            <div className={num}>{px}</div>
            <div className={num}>0.000000</div>
            <div className={num}>{pz}</div>
            <div className={num}>0.000000</div>
            <div className={num}>0.000000</div>
            <div className={num}>0.000000</div>
            <div className={`${cell} bg-[#f0f0f0]`} />
            <div className={`${cell} bg-[#f0f0f0]`} />
            <div className={`${cell} bg-[#f0f0f0]`} />
            <div className={`${cell} bg-white`} />
          </div>
        ))}
        <div className={`${cell} justify-center border-r-2 border-r-[#8a8a8a] bg-[#e0e0e0]`}>11</div>
        {["a", "b", "c", "d", "e", "f", "g", "h", "i", "j", "k", "l"].map((k) => (
          <div key={k} className={`${cell} bg-white`} />
        ))}
        <div className={`${cell} bg-[#f0f0f0]`} />
      </div>
      <div className="flex h-[222px] w-[18px] shrink-0 flex-col">
        <span className="flex h-[14px] items-center justify-center">
          <svg width="9" height="6" viewBox="0 0 9 6"><path d="M1 5l3.500-3.500L8 5" fill="none" stroke="#333" strokeWidth="1.500" /></svg>
        </span>
        <span className="flex-1 bg-[#c9c9c9]" />
        <span className="flex h-[17px] items-center justify-center">
          <svg width="9" height="6" viewBox="0 0 9 6"><path d="M1 1l3.500 3.500L8 1" fill="none" stroke="#333" strokeWidth="1.500" /></svg>
        </span>
      </div>
    </div>
  );
}

const tabs: [string, string][] = [
  ["Cargas nodais", "w-[74px]"],
  ["Cargas em barras", "w-[95px]"],
  ["Deformações de nós impostas", "w-[151px]"],
  ["Imperfeições", "w-[70px]"],
];

function NavTabs() {
  return (
    <div className="flex h-[18px] shrink-0 items-start border-b border-[#c8c8c8] bg-[#f0f0f0] pl-[1px] text-[11.200px] tracking-[-0.35px] text-black [font-family:'Liberation_Sans',sans-serif]">
      {tabs.map(([t, w]) => (
        <div key={t} className={`flex h-[16px] items-center justify-center whitespace-nowrap rounded-b-[3px] border-b border-r border-[#8a8a8a] ${w}`}>{t}</div>
      ))}
    </div>
  );
}

const statusL = [
  ["AJUSTAR", "w-[51px]", false], ["GRELHA", "w-[49px]", false], ["CARTES", "w-[50px]", true],
  ["AJUST. OBJ.", "w-[67px]", true], ["LINHAS AUX.", "w-[72px]", true], ["DXF", "w-[29px]", true],
] as const;

const navy = "#000080";
const plum = "#800070";
const lbl = (x: number, y: number, t: string, c: string) => (
  <text key={`${t}${x}${y}`} x={x} y={y + 1} fontSize="10.500" fontWeight="700" fill={c} letterSpacing=".15" fontFamily="Liberation Sans, sans-serif">{t}</text>
);
const tick = (x: number, y: number, c: string) => (
  <path key={`t${x}${y}`} d={`M${x} ${y}h5`} stroke={c} strokeWidth="1.500" />
);
const down = (x: number, y1: number, y2: number, c: string) => (
  <g key={`d${x}${y1}`}>
    <path d={`M${x} ${y1}V${y2 - 6}`} stroke={c} strokeWidth="2" />
    <path d={`M${x - 3.500} ${y2 - 7}h7L${x} ${y2}z`} fill={c} />
  </g>
);
const up = (x: number, y1: number, y2: number, c: string) => (
  <g key={`u${x}${y1}`}>
    <path d={`M${x} ${y2}V${y1 + 6}`} stroke={c} strokeWidth="2" />
    <path d={`M${x - 3.500} ${y1 + 7}h7L${x} ${y1}z`} fill={c} />
  </g>
);

function Model() {
  return (
    <svg width="1647" height="600" viewBox="270 100 1647 600" className="block">
      <text x="275" y="116" fontSize="11" fill="#000" fontFamily="Liberation Sans, sans-serif">CC4 : Carga equivalente</text>
      <text x="275" y="130" fontSize="11" fill="#000" fontFamily="Liberation Sans, sans-serif">Cargas [kN]</text>

      {/* left member */}
      <rect x="664" y="172" width="7" height="358" fill="#7272ec" />
      <circle cx="667" cy="172" r="2" fill="#8a1010" />
      {down(667.500, 130, 158, navy)}
      {lbl(673, 134, "3.350000", navy)}
      {lbl(652, 163, "0.083750", navy)}
      {tick(647, 170, navy)}
      <path d="M651 532l8-8 18 0 7 5-4 5-19 4-9-1z" fill="#55e055" />
      <path d="M667 531l38 4" stroke="#e01010" strokeWidth="1.500" />
      <path d="M696 531l9 4-9 2z" fill="#d01010" />
      <path d="M667 531l-16 16" stroke="#30d830" />
      {up(667, 540, 552, plum)}
      {down(667, 552, 567, "#0000d0")}
      {lbl(639, 547, "0.083750", plum)}
      {lbl(618, 578, "3.350000", plum)}
      <text x="711" y="541" fontSize="10" fill="#e01010" fontFamily="Liberation Sans, sans-serif">X</text>
      <text x="648" y="551" fontSize="9" fill="#20d020" fontFamily="Liberation Sans, sans-serif">Y</text>
      <text x="664" y="581" fontSize="10" fill="#2020e0" fontFamily="Liberation Sans, sans-serif">Z</text>

      {/* axes */}
      <path d="M325 596l34 5" stroke="#e01010" strokeWidth="2" />
      <path d="M352 597l12 4-13 2z" fill="#c00000" />
      <path d="M325 596l-13 11" stroke="#20d020" strokeWidth="2" />
      <path d="M316 601l-6 7 2-8z" fill="#108010" />
      {down(325, 596, 634, "#0000e0")}
      <text x="367" y="607" fontSize="10" fill="#e01010" fontFamily="Liberation Sans, sans-serif">X</text>
      <text x="303" y="617" fontSize="10" fill="#20d020" fontFamily="Liberation Sans, sans-serif">Y</text>
      <text x="322" y="647" fontSize="10" fill="#2020e0" fontFamily="Liberation Sans, sans-serif">Z</text>

      {/* right member */}
      <rect x="1120" y="232" width="7" height="358" fill="#7c7cf0" />
      <circle cx="1123" cy="232" r="1.800" fill="#8a1010" />
      <circle cx="1122" cy="322" r="1.500" fill="#8a1010" />
      <circle cx="1122" cy="411" r="1.500" fill="#8a1010" />
      <circle cx="1122" cy="500" r="1.500" fill="#8a1010" />
      <path d="M1123 210v8" stroke={navy} strokeWidth="1.500" />
      {lbl(1129, 214, "0.225000", navy)}
      {lbl(1109, 222, "0.005625", navy)}
      {tick(1103, 229, navy)}
      {down(1123, 292, 308, navy)}
      {lbl(1129, 295, "1.475000", navy)}
      {lbl(1108, 311, "0.036875", navy)}
      {tick(1103, 319, navy)}
      {tick(1138, 324, plum)}
      {lbl(1094, 337, "0.005625", plum)}
      {lbl(1074, 346, "0.225000", plum)}
      <path d="M1123 336v7" stroke={plum} strokeWidth="2" />
      {down(1123, 364, 398, navy)}
      {lbl(1129, 367, "3.975000", navy)}
      {lbl(1108, 402, "0.099375", navy)}
      {tick(1103, 409, navy)}
      {tick(1138, 414, plum)}
      {lbl(1095, 427, "0.036875", plum)}
      {up(1123, 424, 436, plum)}
      {lbl(1129, 433, "7.725000", navy)}
      {lbl(1076, 444, "1.475000", plum)}
      {down(1123, 436, 484, navy)}
      {lbl(1107, 491, "0.193125", navy)}
      {tick(1101, 498, navy)}
      {tick(1138, 503, plum)}
      {lbl(1095, 517, "0.099375", plum)}
      {up(1123, 517, 547, plum)}
      {lbl(1074, 551, "3.975000", plum)}
      <path d="M1107 597l4-9 9-3 19 4-5 7-14 3z" fill="#55e055" />
      <rect x="1120" y="560" width="7" height="30" fill="#7c7cf0" />
      {tick(1139, 593, plum)}
      {lbl(1100, 606, "0.193125", plum)}
      {up(1123, 607, 662, plum)}
      {lbl(1074, 665, "7.725000", plum)}
    </svg>
  );
}

function Annotations() {
  return (
    <svg width="1919" height="1040" viewBox="0 0 1919 1040" className="pointer-events-none absolute inset-0">
      <defs>
        <filter id="sh" x="-30%" y="-30%" width="170%" height="170%">
          <feDropShadow dx="5" dy="5" stdDeviation="2" floodColor="#000" floodOpacity=".3" />
        </filter>
      </defs>
      <g fill="none" filter="url(#sh)">
        <rect x="605" y="115" width="144" height="73" stroke="#f79a4c" strokeWidth="2" />
        <rect x="585" y="521" width="143" height="73" stroke="#f79a4c" strokeWidth="2" />
        <rect x="1067" y="185" width="121" height="496" stroke="#f00000" strokeWidth="2" />
        <rect x="646" y="798" width="66" height="31" stroke="#f79a4c" strokeWidth="2" />
        <rect x="778" y="798" width="66" height="31" stroke="#f79a4c" strokeWidth="2" />
        <rect x="646" y="831" width="66" height="127" stroke="#f00000" strokeWidth="2" />
        <rect x="778" y="831" width="66" height="127" stroke="#f00000" strokeWidth="2" />
      </g>
      <g filter="url(#sh)">
        <path d="M724 597l27 19-12 7 60 172-7 2-60-172-12 4z" fill="#fac090" />
        <path d="M1062 625L1053 662 1043 654.500 850 887.500 844 882.500 1037 649.500 1027 641z" fill="#f00000" />
      </g>
    </svg>
  );
}

export default function App() {
  return (
    <div className="relative flex h-[1040px] w-[1919px] flex-col overflow-hidden bg-white [font-family:'Noto_Sans',sans-serif]">
      <header className="flex h-[22px] shrink-0 items-center bg-white">
        <svg width="18" height="18" viewBox="0 0 18 18" className="ml-[2px]">
          <rect x="3" y="1" width="13" height="12" fill="#5c88c8" stroke="#2a4a80" />
          <path d="M5 4h9M5 7h9" stroke="#fff" />
          <circle cx="5" cy="14" r="3.500" fill="#d8b040" stroke="#6a5010" />
        </svg>
        <span className="ml-[2px] text-[11.100px] text-[#111]">RSTAB 8.23.01 x64 - [4631_inclination, CC4*]</span>
        <div className="ml-auto mr-[1px] flex items-center">
          <svg width="46" height="18" viewBox="0 0 46 18"><path d="M18 9h10" stroke="#111" /></svg>
          <svg width="46" height="18" viewBox="0 0 46 18"><path d="M21 6h8v8h-2M19 6h8v9h-8z" transform="translate(-1 -1)" fill="#fff" stroke="#111" /></svg>
          <svg width="46" height="18" viewBox="0 0 46 18"><path d="M18 4l10 10M28 4L18 14" stroke="#111" /></svg>
        </div>
      </header>

      <nav className="flex h-[24px] shrink-0 items-center bg-[#d1d5de] text-[10.900px] text-[#454c58]">
        <svg width="20" height="17" viewBox="0 0 20 17" className="ml-[5px] mr-[2px]">
          <path d="M1 1v15" stroke="#777" strokeDasharray="1 2" />
          <rect x="4" y="1" width="15" height="14" fill="#1c3d8a" />
          <path d="M4 9h15M11.500 2v12M11.500 2L6 9M11.500 2L17 9" stroke="#fff" strokeWidth="1.200" />
        </svg>
        {menus.map((m) => (
          <span key={m} className="px-[7.500px]"><span className="underline decoration-[#8a8f9a] underline-offset-2">{m[0]}</span>{m.slice(1)}</span>
        ))}
        <div className="ml-auto mr-[3px] flex items-center gap-[5px]">
          <svg width="10" height="10" viewBox="0 0 10 10"><path d="M1 8h7" stroke="#888" strokeWidth="2" /></svg>
          <svg width="10" height="10" viewBox="0 0 10 10"><rect x="1" y="1" width="8" height="8" fill="#ddd" stroke="#888" /><path d="M1 3h8" stroke="#888" strokeWidth="2" /></svg>
          <svg width="10" height="10" viewBox="0 0 10 10"><path d="M1 1l8 8M9 1L1 9" stroke="#888" strokeWidth="2" /></svg>
        </div>
      </nav>

      <div className="flex h-[53px] shrink-0 flex-col border-b border-[#6c6f76] bg-[#d1d5de]">
        <div className="flex h-[26px] items-center">
          <Seg><Bar wideSep items="g new open db1 db2 save clip print prev | undo redo | para circ target starwin win2 | list* table* | load _ C al ar ! actp* actx* eye xxg | hand gridA gridB" /></Seg>
          <Seg><Bar items="g dots1 dots2 blue1 blue2 blue3* grid3 frame | chain rot mirror xcross info gear1 gear2" /></Seg>
          <Seg last><Bar items="g bd1 bd2 bd3 bd4" /></Seg>
        </div>
        <div className="flex h-[26px] items-center">
          <Seg><Bar items="g s1 v barS nodeS barS2 supS wandS | loadN matS treeS twistS | beamS v xxS | selS | combo v" /></Seg>
          <Seg><Bar items="g hand2 zoomW zoomX box box2 | vx vy vz vmx v lamp v | shield v" /></Seg>
          <Seg last><Bar items="g frameG tag | nI nN vyD vzD mtD myD mzD pyD pzD | greenUp beamSine multi | report" /></Seg>
        </div>
      </div>

      <div className="flex min-h-0 flex-1">
        <Navigator />
        <div className="w-[6px] shrink-0 bg-[#e4e6ec]" />
        <main className="flex min-w-0 flex-1 flex-col">
          <div className="h-[601px] shrink-0 border-r-2 border-[#d0d0d0] bg-white"><Model /></div>
          <div className="h-[3px] shrink-0 bg-[#eef0f4]" />
          <div className="flex h-[19px] shrink-0 items-center justify-between bg-[#b8bfca] pb-[2px] pl-[3px] pr-[4px] text-[12px] tracking-[0.2px] text-[#444c58]">
            <span>3.1 Cargas nodais</span>
            <span className="flex items-center gap-[7px]">
              <svg width="10" height="11" viewBox="0 0 10 11"><path d="M3 1h4v5H3zM1 6h8M5 6v4" fill="none" stroke="#6a7280" /></svg>
              <svg width="10" height="10" viewBox="0 0 10 10"><path d="M1 1l8 8M9 1L1 9" stroke="#6a7280" strokeWidth="1.200" /></svg>
            </span>
          </div>
          <div className="flex h-[25px] shrink-0 items-center bg-gradient-to-b from-[#eaeef7] to-[#d2d7e0] pb-[1px] pl-[8px]">
            <Bar wideSep combo="w-[198px]" items="t1 t2 t3* t4 t5 | tin tout | rotL* rotR* rotG | gPlus gMul gDiv | gX | delR insL insR | ctY ctB ctP | act* | load hand2 | C _ | al | ar | sortU sortU | hand | xls | keyp | abEq fx fxr" />
          </div>
          <LoadsTable />
          <NavTabs />
          <div className="flex-1 bg-[#f0f0f0]" />
        </main>
      </div>

      <footer className="flex h-[22px] shrink-0 items-center border-b border-[#222] bg-gradient-to-b from-[#d2d5db] to-[#a9aeb6] text-[11.500px] text-[#222]">
        <span className="pl-[3px]">Plano de trabalho</span>
        <div className="ml-auto flex h-full items-center">
          {statusL.map(([t, w, sunk]) => (
            <span key={t} className={`mr-[2px] flex h-[18px] items-center justify-center whitespace-nowrap ${w} ${sunk ? "border border-[#333] border-b-white border-r-white" : "border border-[#b0b4bb]"}`}>{t}</span>
          ))}
          <span className="w-[102px]" />
          <span className="w-[88px]">CS: Global XYZ</span>
          <span className="w-[88px] border-l border-[#777] pl-[2px]">Plano: XZ</span>
          <span className="w-[74px] border-l border-[#777] pl-[2px]">X:&nbsp; 28.958 m</span>
          <span className="w-[74px] border-l border-[#777] pl-[2px]">Y:&nbsp; 0.000 m</span>
          <span className="w-[73px] border-l border-[#777] pl-[2px]">Z:&nbsp; -5.763 m</span>
        </div>
      </footer>

      <Annotations />
    </div>
  );
}
